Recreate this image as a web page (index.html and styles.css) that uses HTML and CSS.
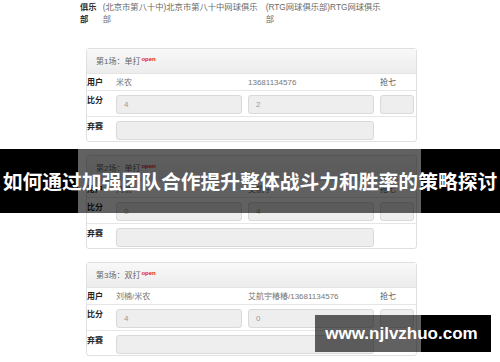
FILE: index.html
```html
<!DOCTYPE html>
<html lang="zh-CN">
<head>
    <meta charset="utf-8" />
    <meta name="viewport" content="width=device-width, initial-scale=1" />
    <title>如何通过加强团队合作提升整体战斗力和胜率的策略探讨</title>
    <link rel="stylesheet" href="styles.css">
</head>
<body>
    <div class="page">
        <div class="club-row">
            <span class="club-label">俱乐部</span>
            <span class="club-home">(北京市第八十中)北京市第八十中网球俱乐部</span>
            <span class="club-away">(RTG网球俱乐部)RTG网球俱乐部</span>
        </div>

        <div class="match-list">
            <section class="match">
                <div class="match-head">第1场：单打<sup class="tag-open">open</sup></div>
                <div class="match-row row-users">
                    <span class="row-label">用户</span>
                    <span>米农</span>
                    <span>13681134576</span>
                    <span>抢七</span>
                </div>
                <div class="match-row row-field">
                    <span class="row-label">比分</span>
                    <div class="field">4</div>
                    <div class="field">2</div>
                    <div class="field field-small"></div>
                </div>
                <div class="match-row row-field row-last">
                    <span class="row-label">弃赛</span>
                    <div class="field field-wide"></div>
                </div>
            </section>

            <section class="match">
                <div class="match-head">第2场：单打<sup class="tag-open">open</sup></div>
                <div class="match-row row-users">
                    <span class="row-label">用户</span>
                    <span>刘楠</span>
                    <span>艾航宇</span>
                    <span>抢七</span>
                </div>
                <div class="match-row row-field">
                    <span class="row-label">比分</span>
                    <div class="field">0</div>
                    <div class="field">4</div>
                    <div class="field field-small"></div>
                </div>
                <div class="match-row row-field row-last">
                    <span class="row-label">弃赛</span>
                    <div class="field field-wide"></div>
                </div>
            </section>

            <section class="match">
                <div class="match-head">第3场：双打<sup class="tag-open">open</sup></div>
                <div class="match-row row-users">
                    <span class="row-label">用户</span>
                    <span>刘楠/米农</span>
                    <span>艾航宇椿椿/13681134576</span>
                    <span>抢七</span>
                </div>
                <div class="match-row row-field">
                    <span class="row-label">比分</span>
                    <div class="field">4</div>
                    <div class="field">0</div>
                    <div class="field field-small"></div>
                </div>
                <div class="match-row row-field row-last">
                    <span class="row-label">弃赛</span>
                    <div class="field field-wide"></div>
                </div>
            </section>
        </div>
    </div>

    <div class="title-banner">如何通过加强团队合作提升整体战斗力和胜率的策略探讨</div>
    <div class="watermark">www.njlvzhuo.com</div>
</body>
</html>
```

FILE: styles.css
```css
body {
    font-family: "Liberation Sans", "Noto Sans CJK SC", sans-serif;
    background-color: #fff;
    color: #666;
    margin: 0;
    padding: 0;
    width: 500px;
    height: 362px;
    overflow: hidden;
    position: relative;
}

.page {
    padding-top: 1px;
}

/* club names on top */
.club-row {
    display: flex;
    padding-left: 80px;
    font-size: 8.3px;
    line-height: 12px;
    color: #6a6a6a;
    word-break: break-all;
}

.club-label {
    width: 22.7px;
    flex-shrink: 0;
    font-weight: bold;
    color: #333;
    padding-right: 4px;
    box-sizing: border-box;
}

.club-home {
    width: 163px;
    flex-shrink: 0;
    padding-right: 3px;
    box-sizing: border-box;
}

.club-away {
    width: 120px;
    flex-shrink: 0;
}

.match-list {
    display: flex;
    flex-direction: column;
    gap: 13px;
    margin-top: 23px;
    margin-left: 86px;
    width: 331px;
}

.match {
    border: 1px solid #e0e0e0;
    border-radius: 3px;
    background-color: #fff;
    font-size: 8px;
}

.match-head {
    height: 25px;
    line-height: 26px;
    padding-left: 9px;
    background: linear-gradient(#f8f8f8, #ececec);
    border-bottom: 1px solid #e4e4e4;
    color: #666;
    box-sizing: border-box;
}

.tag-open {
    font-size: 6px;
    font-weight: bold;
    color: #e31b1b;
    vertical-align: 3px;
    line-height: 0;
    margin-left: 1px;
}

.match-row {
    display: grid;
    grid-template-columns: 29px 132px 132px 1fr;
    border-bottom: 1px solid #e6e6e6;
}

.row-label {
    font-weight: bold;
    color: #222;
}

.row-users {
    height: 16px;
    line-height: 17px;
    color: #777;
}

.row-users span:last-child {
    color: #555;
}

.row-field {
    height: 25px;
    align-items: start;
}

.row-field .row-label {
    padding-top: 5px;
    line-height: 10px;
}

.row-last {
    border-bottom: none;
    height: 24px;
}

.field {
    margin-top: 4px;
    width: 126px;
    height: 19px;
    line-height: 17px;
    box-sizing: border-box;
    padding-left: 7px;
    background-color: #eee;
    border: 1px solid #d9d9d9;
    border-radius: 3px;
    color: #999;
}

.field-small {
    width: 34px;
}

.field-wide {
    grid-column: 2 / 4;
    width: 258px;
}

/* overlays of the picture */
.title-banner {
    position: absolute;
    left: 0;
    top: 149px;
    width: 500px;
    height: 64px;
    line-height: 64px;
    text-align: center;
    white-space: nowrap;
    font-family: "Noto Sans CJK SC", sans-serif;
    font-size: 19.8px;
    font-weight: bold;
    color: #fff;
    background: linear-gradient(to right, #000 78px, rgba(0, 0, 0, 0.62) 78px, rgba(0, 0, 0, 0.62) 421px, #000 421px);
}

.watermark {
    position: absolute;
    left: 315px;
    top: 315px;
    width: 176px;
    height: 37px;
    line-height: 37px;
    padding-right: 3px;
    box-sizing: border-box;
    text-align: center;
    font-family: "Liberation Sans", sans-serif;
    font-size: 17px;
    font-weight: bold;
    color: #fff;
    background: linear-gradient(to right, rgba(0, 0, 0, 0.62) 106px, #000 106px);
}
```
